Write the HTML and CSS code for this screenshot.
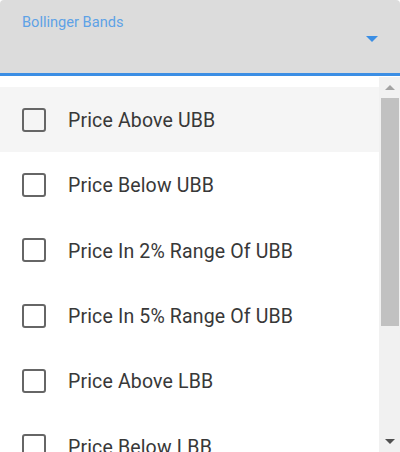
FILE: index.html
```html
<!DOCTYPE html>
<html>
<head>
<meta charset="utf-8">
<link rel="stylesheet" href="styles.css">
</head>
<body>
<div class="select">
  <div class="field">
    <span class="label">Bollinger Bands</span>
    <span class="caret"></span>
  </div>
  <div class="panel">
    <ul class="list">
      <li class="item active"><span class="box"></span><span class="text">Price Above UBB</span></li>
      <li class="item"><span class="box"></span><span class="text">Price Below UBB</span></li>
      <li class="item"><span class="box"></span><span class="text">Price In 2% Range Of UBB</span></li>
      <li class="item"><span class="box"></span><span class="text">Price In 5% Range Of UBB</span></li>
      <li class="item"><span class="box"></span><span class="text">Price Above LBB</span></li>
      <li class="item"><span class="box"></span><span class="text">Price Below LBB</span></li>
      <li class="item"><span class="box"></span><span class="text">Price In 2% Range Of LBB</span></li>
    </ul>
    <div class="scrollbar">
      <div class="sb-btn"><span class="arrow up"></span></div>
      <div class="thumb"></div>
      <div class="track"></div>
      <div class="sb-btn"><span class="arrow down"></span></div>
    </div>
  </div>
</div>
</body>
</html>
```
FILE: styles.css
```css
html, body {
  margin: 0;
  padding: 0;
  background: #ffffff;
}
body {
  font-family: Roboto, "Noto Sans", sans-serif;
  width: 400px;
  height: 452px;
  overflow: hidden;
}
.select {
  display: flex;
  flex-direction: column;
  height: 452px;
}
.field {
  position: relative;
  height: 73px;
  background: #dcdcdc;
  border-bottom: 3px solid #3b8ee4;
  border-radius: 4px 4px 0 0;
  box-sizing: content-box;
}
.label {
  position: absolute;
  left: 22px;
  top: 14px;
  font-size: 14.6px;
  color: #5ea2e6;
  line-height: 17px;
}
.caret {
  position: absolute;
  left: 366px;
  top: 36px;
  width: 0;
  height: 0;
  border-left: 6px solid transparent;
  border-right: 6px solid transparent;
  border-top: 6px solid #3b8ee4;
}
.panel {
  flex: 1;
  display: flex;
  margin-top: 1px;
  min-height: 0;
}
.list {
  flex: 1;
  margin: 0;
  padding: 10px 0 0;
  list-style: none;
  overflow: hidden;
}
.item {
  height: 65.3px;
  display: flex;
  align-items: center;
  padding-left: 22px;
}
.item.active {
  background: #f5f5f5;
}
.box {
  width: 20px;
  height: 20px;
  border: 2.5px solid #666666;
  border-radius: 3px;
  flex: none;
}
.text {
  margin-left: 22px;
  margin-top: 2px;
  font-size: 19.5px;
  letter-spacing: 0.15px;
  color: #383838;
  white-space: nowrap;
}
.scrollbar {
  width: 21px;
  flex: none;
  display: flex;
  flex-direction: column;
  background: #f1f1f1;
}
.sb-btn {
  height: 21px;
  display: flex;
  align-items: center;
  justify-content: center;
  flex: none;
}
.arrow {
  width: 0;
  height: 0;
  border-left: 5px solid transparent;
  border-right: 5px solid transparent;
}
.arrow.up {
  border-bottom: 5px solid #a3a3a3;
}
.arrow.down {
  border-top: 5px solid #505050;
}
.thumb {
  height: 228px;
  margin: 0 1px 0 2px;
  background: #c1c1c1;
  flex: none;
}
.track {
  flex: 1;
}
```
